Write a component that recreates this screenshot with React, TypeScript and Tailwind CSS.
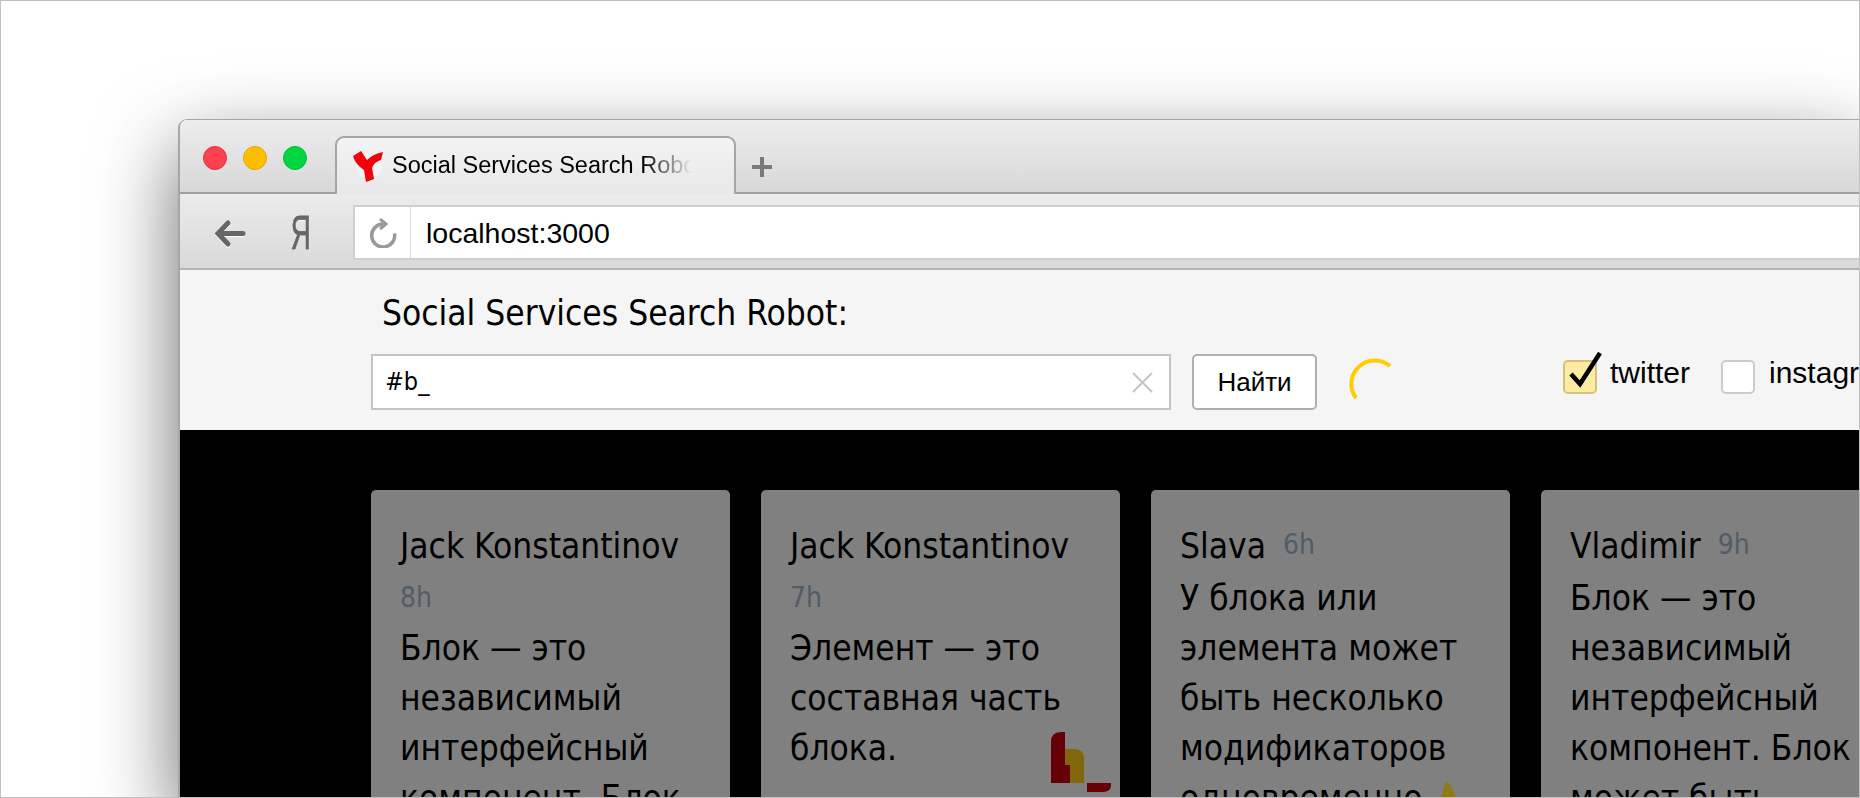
import React from "react";

const cards = [
  { name: "Jack Konstantinov", time: "8h", text: "Блок — это независимый интерфейсный компонент. Блок может быть" },
  { name: "Jack Konstantinov", time: "7h", text: "Элемент — это составная часть блока." },
  { name: "Slava", time: "6h", text: "У блока или элемента может быть несколько модификаторов одновременно" },
  { name: "Vladimir", time: "9h", text: "Блок — это независимый интерфейсный компонент. Блок может быть" },
];

function YandexLogo() {
  return (
    <svg width="30" height="31" viewBox="0 0 30 31" className="shrink-0">
      <circle cx="16" cy="15" r="13" fill="#f4f4f4" />
      <path d="M0 5 L8 0 L14 9 Q20 3 30 1 L28 9 Q21 11 19 17 L21 28 L13 31 L11 19 Q2 13 0 5 Z" fill="#f4000c" />
    </svg>
  );
}

function TrafficLight({ className }: { className: string }) {
  return <span className={`h-6 w-6 rounded-full border ${className}`} />;
}

function TabBar() {
  return (
    <div className="flex h-[74px] items-start border-b-2 border-[#9f9f9f] bg-gradient-to-b from-[#ededed] to-[#d8d8d8]">
      <div className="mt-[26px] ml-[23px] flex gap-4">
        <TrafficLight className="border-[#e0303c] bg-[#ff4050]" />
        <TrafficLight className="border-[#e5a500] bg-[#ffbd00]" />
        <TrafficLight className="border-[#00bb3a] bg-[#00d640]" />
      </div>
      <div className="mt-[16px] ml-[28px] flex h-[58px] w-[401px] items-center rounded-t-[9px] border-2 border-b-0 border-[#a5a5a5] bg-gradient-to-b from-[#f3f3f3] to-[#e8e8e8] pl-[16px]">
        <YandexLogo />
        <span className="ml-[9px] w-[306px] overflow-hidden text-[23.5px] whitespace-nowrap text-black [mask-image:linear-gradient(to_right,#000_82%,transparent_98%)]">
          Social Services Search Robot
        </span>
      </div>
      <svg width="22" height="22" viewBox="0 0 22 22" className="mt-[36px] ml-[15px]">
        <path d="M11 1 V21 M1 11 H21" stroke="#7a7a7a" strokeWidth="4" fill="none" />
      </svg>
    </div>
  );
}

function ToolBar() {
  return (
    <div className="flex h-[76px] items-start border-b-2 border-[#b4b4b4] bg-gradient-to-b from-[#ececec] to-[#d9d9d9] pt-[11px]">
      <svg width="32" height="30" viewBox="0 0 32 30" className="mt-[14px] ml-[34px] [filter:drop-shadow(0_1px_0_#fff)]">
        <path d="M14 4 L4 14.5 L14 25 M5 14.5 H29" stroke="#666" strokeWidth="5" strokeLinecap="round" strokeLinejoin="miter" fill="none" />
      </svg>
      <span className="mt-[-2px] ml-[38px] w-[32px] scale-x-[.58] text-center text-[48px] leading-[60px] text-[#666] [-webkit-text-stroke:0.8px_#666] [text-shadow:0_1px_0_#fff]">
        Я
      </span>
      <div className="ml-[37px] flex h-[55px] flex-1 items-center border-2 border-r-0 border-[#cfcfcf] bg-white">
        <div className="flex h-full w-[56px] items-center justify-center border-r border-[#dcdcdc]">
          <svg width="28" height="30" viewBox="0 0 28 30">
            <path d="M14 6 A11.5 11.5 0 1 0 25.5 15.5" stroke="#999" strokeWidth="3.5" fill="none" />
            <path d="M11 1 L17 6 L11 11" stroke="#999" strokeWidth="3" fill="none" />
          </svg>
        </div>
        <span className="ml-[15px] pt-[2px] text-[28.5px] text-black">localhost:3000</span>
      </div>
    </div>
  );
}

function SearchPanel() {
  return (
    <div className="h-[160px] bg-[#f5f5f5] pl-[191px]">
      <h1 className="pt-[21px] pl-[11px] font-['DejaVu_Sans_Condensed','DejaVu_Sans',sans-serif] text-[35px] leading-[44px] font-normal text-black">
        Social Services Search Robot:
      </h1>
      <div className="mt-[19px] flex items-start">
        <div className="flex h-[56px] w-[800px] shrink-0 items-center justify-between border-2 border-[#c4c4c4] bg-white pr-[16px] pl-[12px]">
          <span className="font-['DejaVu_Sans_Condensed','DejaVu_Sans',sans-serif] text-[25px] text-black">#b_</span>
          <svg width="21" height="21" viewBox="0 0 21 21">
            <path d="M1 1 L20 20 M20 1 L1 20" stroke="#c4c4c4" strokeWidth="2" fill="none" />
          </svg>
        </div>
        <button className="ml-[21px] h-[56px] w-[125px] shrink-0 rounded-[5px] border-2 border-[#b0b0b0] bg-white text-[26px] text-black">
          Найти
        </button>
        <svg width="48" height="48" viewBox="0 0 48 48" className="mt-[3px] ml-[31px] shrink-0">
          <path d="M42 9 A23.5 23.5 0 0 0 8 41" stroke="#ffcc00" strokeWidth="4" fill="none" />
        </svg>
        <div className="relative mt-[6px] ml-[167px] h-[34px] w-[34px] shrink-0 rounded-[5px] border-2 border-[#d3c27a] bg-[#ffeba0]">
          <svg width="36" height="36" viewBox="0 0 36 36" className="absolute top-[-10px] left-[4px]">
            <path d="M2 22 L11 32 L31 1" stroke="#000" strokeWidth="4.5" fill="none" />
          </svg>
        </div>
        <span className="mt-[-3px] ml-[13px] shrink-0 text-[30px] leading-[44px] text-black">twitter</span>
        <div className="mt-[6px] ml-[31px] h-[34px] w-[34px] shrink-0 rounded-[5px] border-2 border-[#cccccc] bg-white" />
        <span className="mt-[-3px] ml-[14px] shrink-0 text-[30px] leading-[44px] whitespace-nowrap text-black">instagram</span>
      </div>
    </div>
  );
}

function Card({ name, time, text }: { name: string; time: string; text: string }) {
  return (
    <article className="h-[340px] w-[359px] shrink-0 overflow-hidden rounded-[5px] bg-[#808080] pt-[30px] pr-[28px] pl-[29px] font-['DejaVu_Sans_Condensed','DejaVu_Sans',sans-serif] text-[35px] text-black">
      <div className="flex flex-wrap items-start">
        <span className="mr-[17px] leading-[53px] whitespace-nowrap">{name}</span>
        <span className="text-[28px] leading-[50px] text-[#525c68]">{time}</span>
      </div>
      <p className="leading-[50px]">{text}</p>
    </article>
  );
}

function Watermark() {
  return (
    <svg width="62" height="62" viewBox="0 0 62 62" className="absolute top-[302px] left-[871px]">
      <path d="M0 10 Q0 0 10 0 H14 V33 H19 V51 H0 Z" fill="#660006" />
      <path d="M14 17 H24 Q33 17 33 27 V51 H19 V33 H14 Z" fill="#80680a" />
      <path d="M36 51 H60 V53 Q60 60 52 60 H36 Z" fill="#660006" />
    </svg>
  );
}

export default function App() {
  return (
    <div className="h-[798px] w-[1860px] overflow-hidden border border-[#c0c0c0] bg-white pt-[118px] pl-[177px] font-['Liberation_Sans',Arial,sans-serif]">
      <div className="h-[679px] w-[1681px] overflow-hidden rounded-tl-[9px] border-t border-l-2 border-[#a6a6a6] shadow-[0_30px_80px_rgba(0,0,0,0.58)]">
        <TabBar />
        <ToolBar />
        <SearchPanel />
        <div className="relative flex h-[400px] gap-[31px] bg-black pt-[60px] pl-[191px]">
          {cards.map((card, i) => (
            <Card key={i} {...card} />
          ))}
          <Watermark />
          <svg width="16" height="16" viewBox="0 0 16 16" className="absolute top-[352px] left-[1261px]">
            <path d="M0 16 L4 1 Q6 -1 8 1 L16 16 Z" fill="#907a1a" />
          </svg>
        </div>
      </div>
    </div>
  );
}
